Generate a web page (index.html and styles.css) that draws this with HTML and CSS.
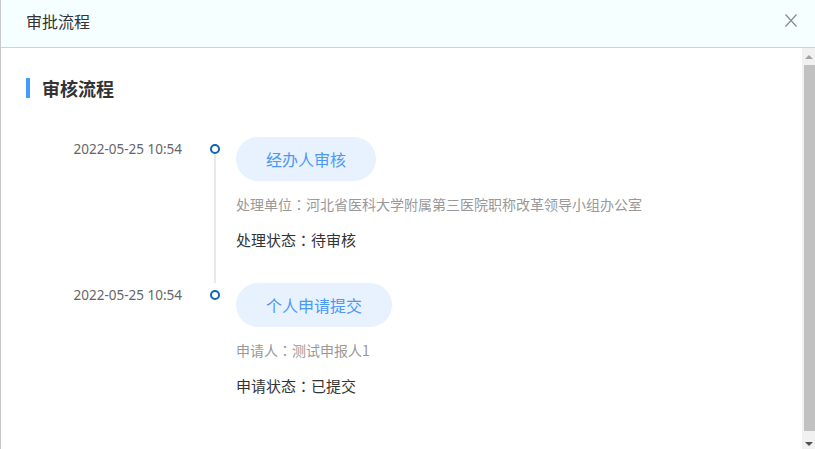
FILE: index.html
```html
<!DOCTYPE html>
<html lang="zh-CN">
<head>
<meta charset="utf-8">
<title>审批流程</title>
<link rel="stylesheet" href="styles.css">
</head>
<body>
<div class="dialog">
  <header class="dialog-header">
    <span class="dialog-title">审批流程</span>
    <svg class="close" width="12" height="13" viewBox="0 0 12 13"><path d="M0.5 0.5 L11.5 12.5 M11.5 0.5 L0.5 12.5" stroke="#8a8a8a" stroke-width="1.2" fill="none"/></svg>
  </header>
  <div class="dialog-body">
    <main class="content">
      <h2 class="section-title">审核流程</h2>
      <div class="timeline">
        <div class="tl-item">
          <div class="tl-date">2022-05-25 10:54</div>
          <div class="tl-axis"><span class="tl-dot"></span><span class="tl-line"></span></div>
          <div class="tl-content">
            <div class="tl-pill">经办人审核</div>
            <div class="tl-info">处理单位<span class="colon" lang="zh-TW">：</span>河北省医科大学附属第三医院职称改革领导小组办公室</div>
            <div class="tl-status">处理状态<span class="colon" lang="zh-TW">：</span>待审核</div>
          </div>
        </div>
        <div class="tl-item last">
          <div class="tl-date">2022-05-25 10:54</div>
          <div class="tl-axis"><span class="tl-dot"></span></div>
          <div class="tl-content">
            <div class="tl-pill">个人申请提交</div>
            <div class="tl-info">申请人<span class="colon" lang="zh-TW">：</span>测试申报人1</div>
            <div class="tl-status">申请状态<span class="colon" lang="zh-TW">：</span>已提交</div>
          </div>
        </div>
      </div>
    </main>
    <div class="scrollbar">
      <span class="arrow-up"></span>
      <span class="thumb"></span>
      <span class="arrow-down"></span>
    </div>
  </div>
</div>
</body>
</html>
```

FILE: styles.css
```css
html, body {
  margin: 0;
  padding: 0;
  width: 815px;
  height: 449px;
  overflow: hidden;
  background: #fff;
}

.dialog {
  width: 815px;
  height: 449px;
  box-sizing: border-box;
  border-left: 1px solid #c8c8c8;
  display: flex;
  flex-direction: column;
  font-family: "Noto Sans CJK SC", "Noto Sans", sans-serif;
  color: #333;
}

.dialog-header {
  height: 47px;
  flex: none;
  background: #f5ffff;
  border-bottom: 1px solid #cfd3d4;
  display: flex;
  align-items: center;
  justify-content: space-between;
  padding: 0 18px 0 25px;
}

.dialog-title {
  font-size: 16px;
  line-height: 20px;
  color: #333;
  margin-top: -6px;
}

.close {
  display: block;
  margin-top: -6px;
}

.dialog-body {
  flex: 1;
  display: flex;
  min-height: 0;
}

.content {
  flex: 1;
  padding: 30px 0 0 25px;
}

.section-title {
  margin: 0 0 39px;
  display: flex;
  align-items: center;
  font-size: 18px;
  line-height: 20px;
  font-weight: 700;
  color: #333;
}

.section-title::before {
  content: "";
  width: 4px;
  height: 20px;
  background: #409eff;
  margin-right: 12px;
}

.timeline {
  display: flex;
  flex-direction: column;
}

.tl-item {
  display: flex;
}

.tl-date {
  width: 156px;
  flex: none;
  text-align: right;
  font-family: "Noto Sans", sans-serif;
  font-size: 13.5px;
  line-height: 20px;
  color: #666;
  padding-top: 2px;
}

.tl-axis {
  width: 20px;
  flex: none;
  margin-left: 23px;
  display: flex;
  flex-direction: column;
  align-items: center;
}

.tl-dot {
  width: 10px;
  height: 10px;
  box-sizing: border-box;
  border: 2px solid #1463ad;
  border-radius: 50%;
  background: #fff;
  margin-top: 7px;
  flex: none;
}

.tl-line {
  flex: 1;
  width: 2px;
  background: #e6e9ee;
}

.tl-content {
  margin-left: 11px;
  padding-bottom: 32px;
  display: flex;
  flex-direction: column;
  align-items: flex-start;
}

.tl-pill {
  height: 44px;
  line-height: 44px;
  padding: 0 30px;
  border-radius: 22px;
  background: #e8f1fe;
  color: #4a9af5;
  font-size: 16px;
}

.tl-info {
  margin-top: 13px;
  font-size: 14px;
  line-height: 20px;
  color: #999;
}

.tl-status {
  margin-top: 15px;
  font-size: 15px;
  line-height: 22px;
  color: #333;
}

.colon {
  font-family: "Noto Sans CJK TC", "Noto Sans CJK SC", sans-serif;
}

.scrollbar {
  width: 13px;
  flex: none;
  background: #f1f1f1;
  display: flex;
  flex-direction: column;
  align-items: flex-end;
}

.arrow-up {
  width: 0;
  height: 0;
  border-left: 4px solid transparent;
  border-right: 4px solid transparent;
  border-bottom: 4px solid #a3a3a3;
  margin: 7px 2px 6px 0;
}

.thumb {
  width: 11px;
  flex: 1;
  background: #c1c1c1;
}

.arrow-down {
  width: 0;
  height: 0;
  border-left: 4px solid transparent;
  border-right: 4px solid transparent;
  border-top: 4px solid #505050;
  margin: 11px 2px 3px 0;
}
```
